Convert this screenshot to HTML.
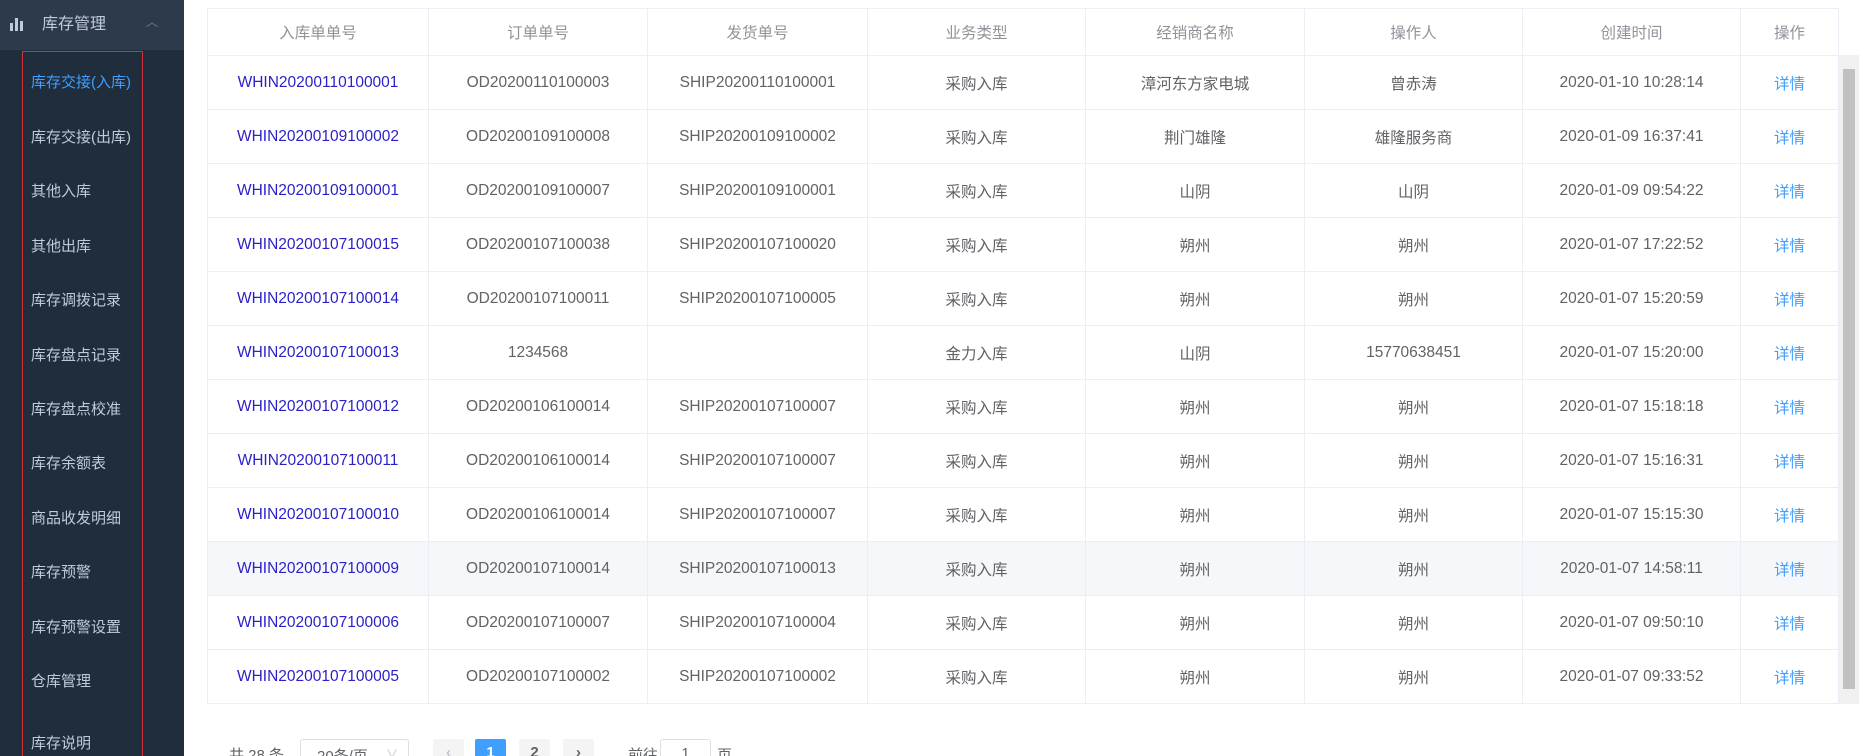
<!DOCTYPE html><html><head><meta charset="utf-8"><style>
*{margin:0;padding:0;box-sizing:border-box}
html{width:1859px;height:756px;overflow:hidden}
body{width:1859px;height:756px;overflow:hidden;background:#fff;font-family:"Liberation Sans","Noto Sans CJK SC",sans-serif;position:relative}
.side{position:absolute;left:0;top:0;width:184px;height:756px;background:#1f2d3d}
.sh{height:50px;background:#2d3a4b;color:#bfcbd9;font-size:16px;line-height:50px;padding-left:42px;position:relative}
.sh .ic{position:absolute;left:10px;top:17px}
.sh .ar{position:absolute;left:146px;top:0;line-height:44px;color:#6f7c8b;font-size:12px}
.box{position:absolute;left:22px;top:51px;width:121px;height:720px;border:1px solid #d2303b}
.mi{position:absolute;left:31px;color:#bfcbd9;font-size:15px}
table{position:absolute;left:207px;top:8px;border-collapse:collapse;font-size:15.5px;table-layout:fixed}
td,th{border:1px solid #ebeef5;text-align:center;height:54px;color:#606266;font-weight:normal;white-space:nowrap}
th{height:47px;color:#909399}
td.l{color:#2a1fc8}td.d{color:#409eff}
tr.h td{background:#f5f7fa}
.sb{position:absolute;left:1839px;top:55px;width:20px;height:649px;background:#f1f1f1}
.sb div{position:absolute;left:4px;top:14px;width:12px;height:620px;background:#c1c1c1}
.pg{position:absolute;top:739px;font-size:15px;color:#606266}
.bt{position:absolute;top:739px;width:31px;height:28px;background:#f4f4f5;border-radius:2px;text-align:center;line-height:28px;font-size:15px;color:#606266;font-weight:bold}
</style></head><body>
<div class="side">
<div class="sh"><svg class="ic" width="14" height="14"><rect x="0" y="6" width="3" height="8" fill="#bfcbd9"/><rect x="5" y="1" width="3" height="13" fill="#bfcbd9"/><rect x="10" y="4" width="3" height="10" fill="#bfcbd9"/></svg>库存管理<span class="ar">︿</span></div>
<div class="box"></div>
<div class="mi" style="top:71px;color:#409eff">库存交接(入库)</div>
<div class="mi" style="top:126px">库存交接(出库)</div>
<div class="mi" style="top:180px">其他入库</div>
<div class="mi" style="top:235px">其他出库</div>
<div class="mi" style="top:289px">库存调拨记录</div>
<div class="mi" style="top:344px">库存盘点记录</div>
<div class="mi" style="top:398px">库存盘点校准</div>
<div class="mi" style="top:452px">库存余额表</div>
<div class="mi" style="top:507px">商品收发明细</div>
<div class="mi" style="top:561px">库存预警</div>
<div class="mi" style="top:616px">库存预警设置</div>
<div class="mi" style="top:670px">仓库管理</div>
<div class="mi" style="top:732px">库存说明</div>
</div>
<table>
<colgroup><col width="221"><col width="219"><col width="220"><col width="218"><col width="219"><col width="218"><col width="218"><col width="98"></colgroup>
<tr><th>入库单单号</th><th>订单单号</th><th>发货单号</th><th>业务类型</th><th>经销商名称</th><th>操作人</th><th>创建时间</th><th>操作</th></tr>
<tr><td class="l">WHIN20200110100001</td><td>OD20200110100003</td><td>SHIP20200110100001</td><td>采购入库</td><td>漳河东方家电城</td><td>曾赤涛</td><td>2020-01-10 10:28:14</td><td class="d">详情</td></tr>
<tr><td class="l">WHIN20200109100002</td><td>OD20200109100008</td><td>SHIP20200109100002</td><td>采购入库</td><td>荆门雄隆</td><td>雄隆服务商</td><td>2020-01-09 16:37:41</td><td class="d">详情</td></tr>
<tr><td class="l">WHIN20200109100001</td><td>OD20200109100007</td><td>SHIP20200109100001</td><td>采购入库</td><td>山阴</td><td>山阴</td><td>2020-01-09 09:54:22</td><td class="d">详情</td></tr>
<tr><td class="l">WHIN20200107100015</td><td>OD20200107100038</td><td>SHIP20200107100020</td><td>采购入库</td><td>朔州</td><td>朔州</td><td>2020-01-07 17:22:52</td><td class="d">详情</td></tr>
<tr><td class="l">WHIN20200107100014</td><td>OD20200107100011</td><td>SHIP20200107100005</td><td>采购入库</td><td>朔州</td><td>朔州</td><td>2020-01-07 15:20:59</td><td class="d">详情</td></tr>
<tr><td class="l">WHIN20200107100013</td><td>1234568</td><td></td><td>金力入库</td><td>山阴</td><td>15770638451</td><td>2020-01-07 15:20:00</td><td class="d">详情</td></tr>
<tr><td class="l">WHIN20200107100012</td><td>OD20200106100014</td><td>SHIP20200107100007</td><td>采购入库</td><td>朔州</td><td>朔州</td><td>2020-01-07 15:18:18</td><td class="d">详情</td></tr>
<tr><td class="l">WHIN20200107100011</td><td>OD20200106100014</td><td>SHIP20200107100007</td><td>采购入库</td><td>朔州</td><td>朔州</td><td>2020-01-07 15:16:31</td><td class="d">详情</td></tr>
<tr><td class="l">WHIN20200107100010</td><td>OD20200106100014</td><td>SHIP20200107100007</td><td>采购入库</td><td>朔州</td><td>朔州</td><td>2020-01-07 15:15:30</td><td class="d">详情</td></tr>
<tr class="h"><td class="l">WHIN20200107100009</td><td>OD20200107100014</td><td>SHIP20200107100013</td><td>采购入库</td><td>朔州</td><td>朔州</td><td>2020-01-07 14:58:11</td><td class="d">详情</td></tr>
<tr><td class="l">WHIN20200107100006</td><td>OD20200107100007</td><td>SHIP20200107100004</td><td>采购入库</td><td>朔州</td><td>朔州</td><td>2020-01-07 09:50:10</td><td class="d">详情</td></tr>
<tr><td class="l">WHIN20200107100005</td><td>OD20200107100002</td><td>SHIP20200107100002</td><td>采购入库</td><td>朔州</td><td>朔州</td><td>2020-01-07 09:33:52</td><td class="d">详情</td></tr>
</table>
<div class="sb"><div></div></div>
<div class="pg" style="left:229px;top:744px">共 28 条</div>
<div class="pg" style="left:300px;width:109px;height:34px;border:1px solid #dcdfe6;border-radius:3px;padding:5px 0 0 16px">20条/页<span style="position:absolute;right:10px;color:#c0c4cc;font-size:12px">∨</span></div>
<div class="bt" style="left:433px;color:#c0c4cc">‹</div>
<div class="bt" style="left:475px;background:#409eff;color:#fff">1</div>
<div class="bt" style="left:519px">2</div>
<div class="bt" style="left:563px">›</div>
<div class="pg" style="left:628px;top:744px">前往</div>
<div class="pg" style="left:660px;width:51px;height:34px;border:1px solid #dcdfe6;border-radius:3px;text-align:center;padding-top:5px">1</div>
<div class="pg" style="left:717px;top:744px">页</div>
</body></html>
